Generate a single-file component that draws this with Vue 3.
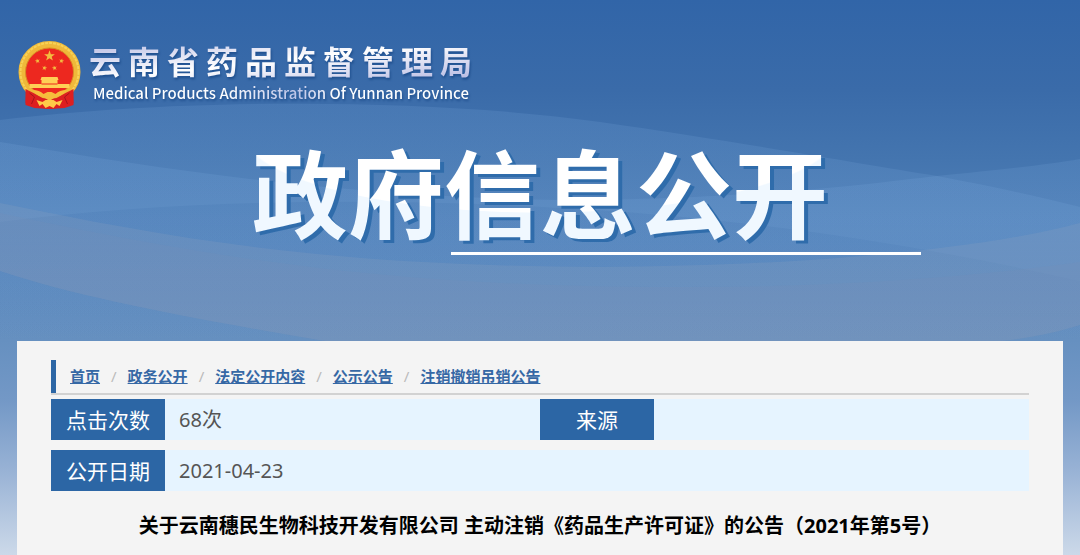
<script setup>
const crumbs = ['首页', '政务公开', '法定公开内容', '公示公告', '注销撤销吊销公告']
const star = '0,-10 2.4,-3.2 9.5,-3.1 3.8,1.2 5.9,8.1 0,4 -5.9,8.1 -3.8,1.2 -9.5,-3.1 -2.4,-3.2'
</script>

<template>
  <div class="page">
    <svg class="waves" viewBox="0 0 1080 341" preserveAspectRatio="none" aria-hidden="true">
      <defs>
        <linearGradient id="fade" gradientUnits="userSpaceOnUse" x1="0" y1="100" x2="0" y2="341">
          <stop offset="0" stop-color="#8ab8ea" stop-opacity=".15" />
          <stop offset=".5" stop-color="#8ab8ea" stop-opacity=".13" />
          <stop offset="1" stop-color="#8ab8ea" stop-opacity="0" />
        </linearGradient>
        <linearGradient id="dim" gradientUnits="userSpaceOnUse" x1="0" y1="200" x2="0" y2="341">
          <stop offset="0" stop-color="#3f70ac" stop-opacity=".2" />
          <stop offset="1" stop-color="#3f70ac" stop-opacity="0" />
        </linearGradient>
      </defs>
      <path d="M0 120C180 98 430 98 600 122C740 142 860 164 937 176C1000 188 1040 197 1080 207V341H0Z" fill="url(#fade)" />
      <path d="M0 142C180 172 340 196 560 200C760 200 900 180 937 176C1000 170 1045 165 1080 159V341H0Z" fill="url(#fade)" />
      <path d="M0 222C180 198 400 198 560 208C720 216 900 240 1080 281V341H0Z" fill="url(#dim)" />
      <path d="M0 203C180 240 330 266 600 267C800 266 980 250 1080 223V325C1055 333 1030 338 1000 341H325C200 320 80 298 0 271Z" fill="#94a6c0" fill-opacity=".2" />
      <path d="M0 213C220 260 400 288 690 287C840 287 980 276 1080 262V325C1055 333 1030 338 1000 341H325C200 320 80 298 0 271Z" fill="#8090b0" fill-opacity=".14" />
    </svg>

    <header class="brand">
      <svg class="emblem" viewBox="0 0 62 68" role="img" aria-label="国徽">
        <path d="M8 46 31 55 54 46 55 62 45 66 31 68 17 66 7 62Z" fill="#d91f20" />
        <circle cx="31" cy="31" r="27.5" fill="#ed281f" stroke="#efb93a" stroke-width="7" />
        <circle cx="31" cy="31" r="29" fill="none" stroke="#f7d257" stroke-width="2" stroke-dasharray="3 1" />
        <circle cx="31" cy="31" r="24" fill="none" stroke="#d98d25" stroke-width="1" />
        <g fill="#f3bd40">
          <polygon :points="star" transform="translate(31 15) scale(.57)" />
          <polygon :points="star" transform="translate(19 20) rotate(-15) scale(.27)" />
          <polygon :points="star" transform="translate(43 20) rotate(15) scale(.27)" />
          <polygon :points="star" transform="translate(26 27) rotate(15) scale(.27)" />
          <polygon :points="star" transform="translate(36 27) rotate(-15) scale(.27)" />
          <path d="M23 36h16l1 3h-1v4h12v4H11v-4h12v-4h-1Z" fill="#ffd055" />
        </g>
        <path d="M23 43h16" stroke="#ed281f" />
        <path d="M7 48l8 4 9 5 7 1 7-1 9-5 8-4v16l-9 3-15 1-15-1-9-3Z" fill="#dd1f20" />
        <path d="M14 49q7 0 11 4l4-2h4l4 2q4-4 11-4-4 6-11 7l-6 4-6-4q-7-1-11-7Z" fill="#f6bd3c" />
        <path d="M18 59l6 2 3-2h8l3 2 6-2-3 6-3-2-3 4-4-2-4 2-3-4-3 2Z" fill="#ffcb48" />
        <path d="M11 52l5 4-3 7M51 52l-5 4 3 7" stroke="#a9131b" fill="none" />
      </svg>
      <div class="names">
        <div class="org">云南省药品监督管理局</div>
        <div class="org-en">Medical Products Administration Of Yunnan Province</div>
      </div>
    </header>

    <h1 class="banner"><span>政府信息公开</span></h1>
    <div class="rule"></div>

    <main class="panel">
      <nav class="crumbs" aria-label="位置">
        <template v-for="(c, i) in crumbs" :key="c">
          <span v-if="i" class="sep">/</span>
          <a href="#">{{ c }}</a>
        </template>
      </nav>
      <table class="meta">
        <colgroup><col class="key" /><col /><col class="key" /><col /></colgroup>
        <tbody>
          <tr>
            <th scope="row">点击次数</th>
            <td>68次</td>
            <th scope="row">来源</th>
            <td></td>
          </tr>
          <tr>
            <th scope="row">公开日期</th>
            <td colspan="3">2021-04-23</td>
          </tr>
        </tbody>
      </table>
      <h2 class="title">关于云南穗民生物科技开发有限公司 主动注销《药品生产许可证》的公告（2021年第5号）</h2>
    </main>
  </div>
</template>

<style>
body {
  margin: 0;
}
</style>

<style scoped>
.page {
  position: relative;
  display: flow-root;
  box-sizing: border-box;
  min-height: 100vh;
  font-family: "Noto Sans", "Noto Sans CJK SC", sans-serif;
  background: linear-gradient(#3165a8 0, #3a6ba9 90px, #4475af 160px, #5382b9 240px, #6690c0 340px, #7398c6 400px, #98b2d5 470px, #ccd9e9 555px);
}
.waves {
  position: absolute;
  top: 0;
  left: 0;
  width: 100%;
  height: 341px;
}
.brand {
  position: relative;
  display: flex;
  gap: 8px;
  padding: 41px 18px 0;
}
.emblem {
  flex: none;
  width: 63px;
  height: 68px;
}
.names {
  margin-top: -2px;
  filter: drop-shadow(1px 2px 1px #1f4f8e);
}
.org {
  width: max-content;
  font: 700 32px/42px "Noto Sans CJK SC", sans-serif;
  letter-spacing: 7px;
  color: transparent;
  background: linear-gradient(to bottom right, #b0b4e0, #fff 50%, #b0b4e0);
  background-clip: text;
}
.org-en {
  width: max-content;
  padding-left: 4px;
  font: 500 15px/24px "Noto Sans CJK SC", sans-serif;
  color: transparent;
  background: linear-gradient(90deg, #fff 35%, #bcc4e8 55%, #fff 65%);
  background-clip: text;
}
.banner {
  position: relative;
  margin: 28px 0 0;
  text-align: center;
  font: 700 96px/106px "Noto Sans CJK SC", sans-serif;
}
.banner span {
  display: inline-block;
  color: transparent;
  background: radial-gradient(ellipse 300px 83px at 50% -7px, #fff 99%, #f0f8ff 100%);
  background-clip: text;
  filter: drop-shadow(4px 3px 0 #2f6cab);
}
.rule {
  position: relative;
  width: 43.5%;
  height: 3px;
  margin: 9px 0 0 41.8%;
  background: #fff;
}
.panel {
  position: relative;
  margin: 86px 17px 0;
  padding: 19px 34px 14px;
  background: #f4f4f4;
}
.crumbs {
  display: flex;
  flex-wrap: wrap;
  gap: 11px;
  padding-left: 14px;
  font-size: 15px;
  line-height: 33px;
  font-weight: 700;
  border-left: 5px solid #2c66a5;
  box-shadow: 0 2px #d2d2d2;
}
.crumbs a {
  color: #3668a5;
}
.sep {
  font-weight: 400;
  color: #bbb;
}
.meta {
  width: 100%;
  margin-top: 6px;
  table-layout: fixed;
  border-spacing: 0;
  font-size: 20px;
  line-height: 30px;
}
.key {
  width: 114px;
}
.meta th,
.meta td {
  height: 41px;
  padding: 0;
}
.meta tr + tr > * {
  border-top: 10px solid #f4f4f4;
}
.meta th {
  font-size: 21px;
  font-weight: 400;
  color: #fff;
  background: #2c66a5;
}
.meta td {
  padding-left: 14px;
  color: #555;
  background: #e6f4ff;
}
.title {
  margin: 20px 0 0;
  text-align: center;
  font-size: 20px;
  line-height: 30px;
  color: #000;
}
</style>
